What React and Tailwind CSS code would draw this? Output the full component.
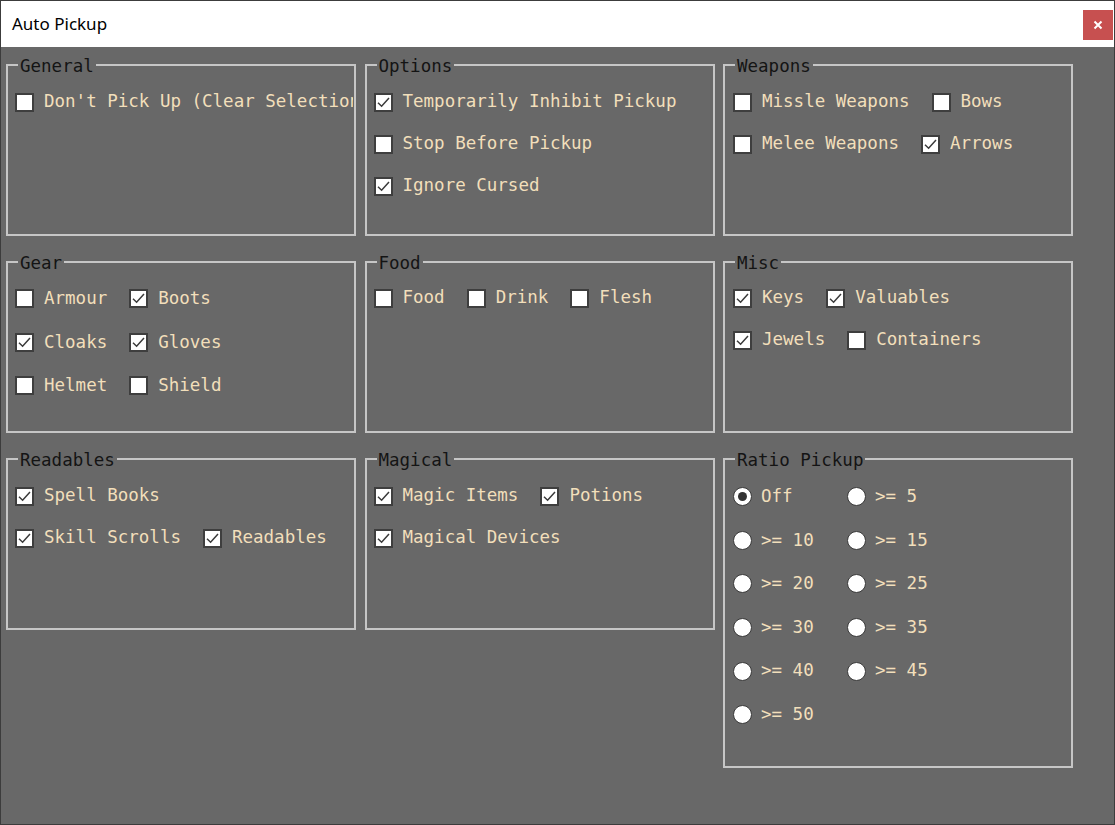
import React from "react";

const mono = { fontFamily: '"DejaVu Sans Mono", "Liberation Mono", monospace' };

function Check({ checked }) {
  return (
    <span className="w-[19px] h-[19px] shrink-0 bg-white border-2 border-[#3e3e3e] flex items-center justify-center">
      {checked && (
        <svg width="15" height="15" viewBox="0 0 15 15">
          <path d="M2 7.8 L5.6 11.2 L13 3" fill="none" stroke="#3a3a3a" strokeWidth="1.5" />
        </svg>
      )}
    </span>
  );
}

function Radio({ checked }) {
  return (
    <span className="w-[19px] h-[19px] shrink-0 rounded-full bg-white border-[1.5px] border-[#3a3a3a] flex items-center justify-center">
      {checked && <span className="w-[9px] h-[9px] rounded-full bg-[#333]" />}
    </span>
  );
}

function CB({ label, checked }) {
  return (
    <div className="flex items-center gap-[10px] whitespace-nowrap">
      <Check checked={checked} />
      <span className="text-[#f2dfbb] text-[17.5px] leading-none" style={mono}>{label}</span>
    </div>
  );
}

function Group({ title, h = "h-[172px]", children }) {
  return (
    <div className={`relative w-[350px] ${h} border-2 border-[#c6c6c6]`}>
      <span
        className="absolute -top-[10px] left-[10px] px-[2px] bg-[#686868] text-[#141414] text-[17.5px] leading-[20px] font-medium"
        style={mono}
      >
        {title}
      </span>
      {children}
    </div>
  );
}

function Rows({ rows, rowH = "h-[42px]", pt = "pt-[15px]", pl = "pl-[7px]" }) {
  return (
    <div className={`flex flex-col ${pt} ${pl} mr-[1px] overflow-hidden`}>
      {rows.map((r, i) => (
        <div key={i} className={`flex items-center gap-[22px] ${rowH}`}>
          {r.map(([l, c]) => (
            <CB key={l} label={l} checked={c} />
          ))}
        </div>
      ))}
    </div>
  );
}

export default function App() {
  const ratios = ["Off", ">= 5", ">= 10", ">= 15", ">= 20", ">= 25", ">= 30", ">= 35", ">= 40", ">= 45", ">= 50"];
  return (
    <div className="w-[1115px] h-[825px] flex flex-col border border-[#3c3c3c] overflow-hidden">
      <div className="h-[46px] bg-white flex items-center justify-between shrink-0">
        <span className="pl-[11px] text-[17px] text-black" style={{ fontFamily: '"Noto Sans", "Open Sans", sans-serif' }}>
          Auto Pickup
        </span>
        <div className="w-[30px] h-[30px] bg-[#c75050] flex items-center justify-center mr-[1px] mt-[2px]">
          <svg width="10" height="10" viewBox="0 0 10 10">
            <path d="M1.5 1.5 L8.5 8.5 M8.5 1.5 L1.5 8.5" stroke="white" strokeWidth="2" />
          </svg>
        </div>
      </div>
      <div className="flex-1 bg-[#686868] pl-[5px] pt-[17px] flex gap-[8.5px]">
        <div className="flex flex-col gap-[25px]">
          <Group title="General">
            <Rows rows={[[["Don't Pick Up (Clear Selection)", false]]]} />
          </Group>
          <Group title="Gear">
            <Rows
              rowH="h-[43.5px]"
              pt="pt-[14px]"
              rows={[
                [["Armour", false], ["Boots", true]],
                [["Cloaks", true], ["Gloves", true]],
                [["Helmet", false], ["Shield", false]],
              ]}
            />
          </Group>
          <Group title="Readables">
            <Rows
              pt="pt-[15px]"
              rows={[
                [["Spell Books", true]],
                [["Skill Scrolls", true], ["Readables", true]],
              ]}
            />
          </Group>
        </div>
        <div className="flex flex-col gap-[25px]">
          <Group title="Options">
            <Rows
              rows={[
                [["Temporarily Inhibit Pickup", true]],
                [["Stop Before Pickup", false]],
                [["Ignore Cursed", true]],
              ]}
            />
          </Group>
          <Group title="Food">
            <Rows pt="pt-[14px]" rows={[[["Food", false], ["Drink", false], ["Flesh", false]]]} />
          </Group>
          <Group title="Magical">
            <Rows
              rows={[
                [["Magic Items", true], ["Potions", true]],
                [["Magical Devices", true]],
              ]}
            />
          </Group>
        </div>
        <div className="flex flex-col gap-[25px]">
          <Group title="Weapons">
            <Rows
              pl="pl-[8px]"
              rows={[
                [["Missle Weapons", false], ["Bows", false]],
                [["Melee Weapons", false], ["Arrows", true]],
              ]}
            />
          </Group>
          <Group title="Misc">
            <Rows
              pl="pl-[8px]"
              pt="pt-[14px]"
              rows={[
                [["Keys", true], ["Valuables", true]],
                [["Jewels", true], ["Containers", false]],
              ]}
            />
          </Group>
          <Group title="Ratio Pickup" h="h-[310px]">
            <div className="grid grid-cols-[114px_114px] auto-rows-[43.6px] pt-[15px] pl-[8px]">
              {ratios.map((r, i) => (
                <div key={r} className="flex items-center gap-[9px]">
                  <Radio checked={i === 0} />
                  <span className="text-[#f2dfbb] text-[17.5px] leading-none whitespace-nowrap" style={mono}>
                    {r}
                  </span>
                </div>
              ))}
            </div>
          </Group>
        </div>
      </div>
    </div>
  );
}
